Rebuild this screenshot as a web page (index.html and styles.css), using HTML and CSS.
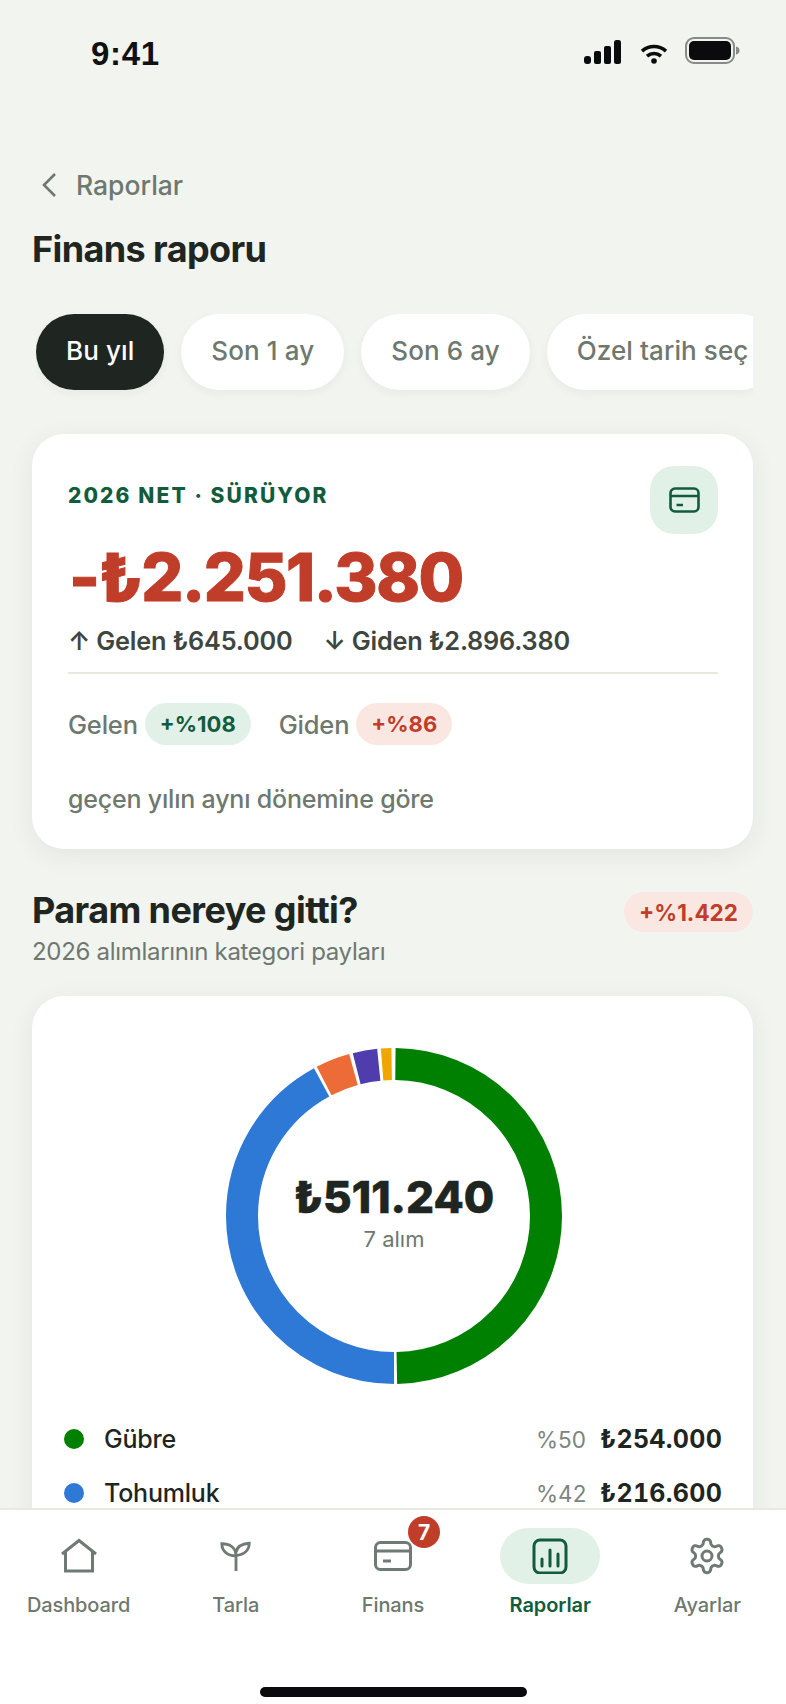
FILE: index.html
```html
<!DOCTYPE html>
<html lang="tr">
<head>
<meta charset="utf-8">
<title>Finans raporu</title>
<link rel="stylesheet" href="styles.css">
</head>
<body>
<div class="screen">
  <main class="content">
    <header class="status">
      <span class="time">9:41</span>
      <div class="status-icons">
        <svg class="sig" width="38" height="24" viewBox="0 0 38 24"><rect x="0" y="16" width="7" height="8" rx="3" /><rect x="10" y="11" width="7" height="13" rx="2" /><rect x="20" y="6" width="7" height="18" rx="2" /><rect x="30" y="0" width="7" height="24" rx="2.5" /></svg>
        <svg class="wifi" width="28" height="20" viewBox="0 0 28 20"><path d="M2 7.2C9 1 19 1 26 7.2" /><path d="M7 12.2c4.200-3.500 9.800-3.500 14 0" /><circle class="dot" cx="14" cy="17" r="2.800" /></svg>
        <svg class="batt" width="55" height="27" viewBox="0 0 55 27"><rect class="batt-o" x="1" y="1" width="48" height="25" rx="8" /><rect class="batt-f" x="4" y="4" width="42" height="19" rx="5" /><path class="batt-t" d="M51 9.500c2.500.5 3.500 2 3.500 4s-1 3.500-3.500 4z" /></svg>
      </div>
    </header>

    <nav class="back">
      <svg width="18" height="26" viewBox="0 0 18 26"><path d="M15 2 4 13l11 11" /></svg>
      <span>Raporlar</span>
    </nav>
    <h1 class="page-title">Finans raporu</h1>

    <div class="chips">
      <span class="chip chip-on">Bu yıl</span>
      <span class="chip">Son 1 ay</span>
      <span class="chip">Son 6 ay</span>
      <span class="chip">Özel tarih seç</span>
    </div>

    <section class="card net">
      <div class="net-top">
        <span class="eyebrow">2026 NET · SÜRÜYOR</span>
        <span class="icon-box">
          <svg width="31" height="26" viewBox="0 0 31 26"><rect x="1.500" y="1.500" width="28" height="23" rx="4.500" /><path d="M1.500 9h28M7.500 18h6.500" /></svg>
        </span>
      </div>
      <div class="amount">-₺2.251.380</div>
      <div class="flows"><span>↑ Gelen ₺645.000</span><span>↓ Giden ₺2.896.380</span></div>
      <div class="compare">
        <span class="cmp-label">Gelen</span><span class="pill pill-green">+%108</span>
        <span class="cmp-label cmp-second">Giden</span><span class="pill pill-red">+%86</span>
      </div>
      <p class="note">geçen yılın aynı dönemine göre</p>
    </section>

    <section class="section-head">
      <div>
        <h2 class="section-title">Param nereye gitti?</h2>
        <p class="section-sub">2026 alımlarının kategori payları</p>
      </div>
      <span class="pill pill-red pill-head">+%1.422</span>
    </section>

    <section class="card chart-card">
      <div class="donut">
        <svg width="336" height="336" viewBox="0 0 336 336">
          <g class="ring">
            <circle cx="168" cy="168" r="152" pathLength="100" stroke="#008000" stroke-dasharray="49.55 50.45" stroke-dashoffset="-0.15" />
            <circle cx="168" cy="168" r="152" pathLength="100" stroke="#2e78d6" stroke-dasharray="42.1 57.9" stroke-dashoffset="-50" />
            <circle cx="168" cy="168" r="152" pathLength="100" stroke="#ec6b37" stroke-dasharray="3.3 96.7" stroke-dashoffset="-92.4" />
            <circle cx="168" cy="168" r="152" pathLength="100" stroke="#4f3dad" stroke-dasharray="2.35 97.65" stroke-dashoffset="-96.05" />
            <circle cx="168" cy="168" r="152" pathLength="100" stroke="#f0a500" stroke-dasharray="1 99" stroke-dashoffset="-98.75" />
          </g>
        </svg>
        <div class="donut-center">
          <strong>₺511.240</strong>
          <span>7 alım</span>
        </div>
      </div>
      <ul class="legend">
        <li><i class="dot-g"></i><span class="lname">Gübre</span><span class="lpct">%50</span><b>₺254.000</b></li>
        <li><i class="dot-b"></i><span class="lname">Tohumluk</span><span class="lpct">%42</span><b>₺216.600</b></li>
      </ul>
    </section>
  </main>

  <footer class="tabbar">
    <div class="tabs">
      <div class="tab">
        <span class="tab-icon"><svg width="40" height="36" viewBox="0 0 40 36"><path d="M3 16 20 2.500 37 16M6.500 13.500V33h27V13.500" /></svg></span>
        <span class="tab-label">Dashboard</span>
      </div>
      <div class="tab">
        <span class="tab-icon"><svg width="34" height="34" viewBox="0 0 36 36"><path d="M18 34V18M18 18C8 18 3 12 3 5c7 0 15 3 15 13ZM18 14c1-6 7-9 14-9.500 0 7-5 12-14 13" /></svg></span>
        <span class="tab-label">Tarla</span>
      </div>
      <div class="tab">
        <span class="tab-icon"><svg width="38" height="30" viewBox="0 0 38 30"><rect x="1.500" y="1.500" width="35" height="27" rx="5" /><path d="M1.500 10h35M9 20h8" /></svg><em class="badge">7</em></span>
        <span class="tab-label">Finans</span>
      </div>
      <div class="tab tab-on">
        <span class="tab-icon"><svg width="36" height="36" viewBox="0 0 36 36"><rect x="2" y="2" width="32" height="33" rx="6" /><path d="M10 21v7M18 12v16M26 16v12" /></svg></span>
        <span class="tab-label">Raporlar</span>
      </div>
      <div class="tab">
        <span class="tab-icon"><svg width="40" height="40" viewBox="0 0 24 24"><path d="M12.220 2h-.44a2 2 0 0 0-2 2v.18a2 2 0 0 1-1 1.730l-.43.25a2 2 0 0 1-2 0l-.15-.08a2 2 0 0 0-2.730.73l-.22.38a2 2 0 0 0 .73 2.730l.15.1a2 2 0 0 1 1 1.720v.51a2 2 0 0 1-1 1.740l-.15.09a2 2 0 0 0-.73 2.730l.22.38a2 2 0 0 0 2.730.73l.15-.08a2 2 0 0 1 2 0l.43.25a2 2 0 0 1 1 1.730V20a2 2 0 0 0 2 2h.44a2 2 0 0 0 2-2v-.18a2 2 0 0 1 1-1.730l.43-.25a2 2 0 0 1 2 0l.15.08a2 2 0 0 0 2.730-.73l.22-.39a2 2 0 0 0-.73-2.730l-.15-.08a2 2 0 0 1-1-1.740v-.5a2 2 0 0 1 1-1.740l.15-.09a2 2 0 0 0 .73-2.730l-.22-.38a2 2 0 0 0-2.730-.73l-.15.08a2 2 0 0 1-2 0l-.43-.25a2 2 0 0 1-1-1.730V4a2 2 0 0 0-2-2z" /><circle cx="12" cy="12" r="3" /></svg></span>
        <span class="tab-label">Ayarlar</span>
      </div>
    </div>
    <div class="home-bar"></div>
  </footer>
</div>
</body>
</html>
```
FILE: styles.css
```css
* { box-sizing: border-box; }
html, body { margin: 0; padding: 0; }
body { background: #f1f4ef; font-family: Inter, "Noto Sans", sans-serif; color: #1f2520; }
.screen { width: 786px; height: 1704px; display: flex; flex-direction: column; overflow: hidden; background: #f1f4ef; }
.content { flex: 1; min-height: 0; overflow: hidden; padding: 0 33px 0 32px; }

.status { height: 82px; padding: 35px 15px 0 59px; display: flex; justify-content: space-between; align-items: flex-start; }
.time { font-family: "Liberation Sans", sans-serif; font-weight: 700; font-size: 33px; line-height: 38px; color: #111; letter-spacing: .7px; }
.status-icons { display: flex; align-items: flex-start; margin-top: 2px; margin-right: -2px; }
.sig { fill: #0b0b0d; margin-top: 3px; }
.wifi { margin: 7px 17px 0 18px; fill: none; stroke: #0b0b0d; stroke-width: 3.6; }
.wifi .dot { fill: #0b0b0d; stroke: none; }
.batt-o { fill: none; stroke: #8a8a88; stroke-width: 2; }
.batt-f { fill: #0b0b0d; }
.batt-t { fill: #8a8a88; }

.back { margin-top: 82px; height: 42px; display: flex; align-items: center; gap: 18px; padding-left: 8px; font-size: 26.500px; font-weight: 500; color: #6e786f; }
.back svg { fill: none; stroke: #6e786f; stroke-width: 2.6; }
.page-title { margin: 20px 0 0; font-size: 36px; line-height: 46px; font-weight: 700; color: #1f2520; letter-spacing: -.6px; }

.chips { display: flex; gap: 17px; margin: 42px 0 0 4px; height: 86px; overflow: hidden; }
.chip { flex: none; height: 76px; padding: 0 30px 3px; border-radius: 38px; background: #fff; box-shadow: 0 3px 10px rgba(40,60,45,.05); display: flex; align-items: center; font-size: 26px; font-weight: 500; color: #6e786f; letter-spacing: .1px; }
.chip-on { background: #1f2520; color: #fff; }

.card { background: #fff; border-radius: 32px; box-shadow: 0 6px 26px rgba(40,60,45,.07); }
.net { height: 415px; margin-top: 34px; padding: 32px 35px 0 36px; }
.net-top { display: flex; justify-content: space-between; align-items: flex-start; height: 68px; }
.eyebrow { margin-top: 17px; font-size: 21px; font-weight: 800; letter-spacing: 2.100px; color: #125c3e; line-height: 26px; }
.icon-box { width: 68px; height: 68px; border-radius: 24px; background: #e1f1e8; display: flex; align-items: center; justify-content: center; }
.icon-box svg { fill: none; stroke: #125c3e; stroke-width: 2.600; }
.amount { margin-top: 5px; margin-left: 1px; font-size: 66px; line-height: 76px; font-weight: 800; color: #c03d29; letter-spacing: -1.400px; -webkit-text-stroke: 1px #c03d29; }
.flows { display: flex; gap: 31px; margin-top: 5px; height: 54px; padding-top: 4px; border-bottom: 2px solid #e8e8df; font-size: 25.300px; line-height: 34px; font-weight: 600; color: #3e463f; letter-spacing: -.2px; }
.compare { display: flex; align-items: center; margin-top: 29px; height: 42px; }
.cmp-label { font-size: 25.500px; font-weight: 500; color: #6e786f; letter-spacing: -.2px; }
.cmp-second { margin-left: 28px; }
.pill { display: inline-flex; align-items: center; justify-content: center; height: 42px; padding: 0 15px; margin-left: 7px; border-radius: 21px; font-size: 22px; font-weight: 700; }
.pill-green { background: #e1f1e8; color: #125c3e; }
.pill-red { background: #fbe7e2; color: #c03d29; }
.note { margin: 38px 0 0; font-size: 25px; line-height: 32px; font-weight: 500; color: #6e786f; letter-spacing: -.2px; }

.section-head { display: flex; justify-content: space-between; align-items: flex-start; margin-top: 38px; }
.section-title { margin: 0; font-size: 36px; line-height: 46px; font-weight: 700; color: #1f2520; letter-spacing: -.6px; }
.section-sub { margin: 3px 0 0; font-size: 24px; line-height: 32px; color: #6e786f; letter-spacing: -.3px; }
.pill-head { margin: 5px 0 0; height: 40px; width: 129px; border-radius: 20px; padding: 0; font-size: 22.500px; }

.chart-card { margin-top: 28px; height: 600px; padding: 52px 31px 0 32px; }
.donut { position: relative; width: 336px; height: 336px; margin: 0 0 0 162px; }
.donut svg { display: block; }
.ring circle { fill: none; stroke-width: 32; transform: rotate(-90deg); transform-origin: 168px 168px; }
.donut-center { position: absolute; inset: 0; display: flex; flex-direction: column; align-items: center; justify-content: center; }
.donut-center strong { font-size: 44px; line-height: 50px; font-weight: 800; color: #1f2520; letter-spacing: 0; margin-top: -6px; -webkit-text-stroke: .6px #1f2520; }
.donut-center span { font-size: 22px; line-height: 30px; color: #6e786f; margin-top: 2px; }

.legend { list-style: none; margin: 37px 0 0; padding: 0; display: flex; flex-direction: column; gap: 18px; }
.legend li { display: flex; align-items: center; height: 36px; font-size: 25px; font-weight: 500; color: #1f2520; }
.legend i { width: 20px; height: 20px; border-radius: 50%; margin-right: 20px; }
.dot-g { background: #008000; }
.dot-b { background: #2e78d6; }
.lname { flex: 1; letter-spacing: -.2px; }
.lpct { font-size: 22.500px; font-weight: 400; color: #7c857d; width: 64px; }
.legend b { font-weight: 700; font-size: 25px; width: 122px; text-align: right; white-space: nowrap; font-variant-numeric: tabular-nums; letter-spacing: .3px; }

.tabbar { flex: none; height: 196px; background: #fff; border-top: 2px solid #e8e8df; display: flex; flex-direction: column; }
.tabs { display: grid; grid-template-columns: repeat(5, 1fr); padding-top: 18px; }
.tab { display: flex; flex-direction: column; align-items: center; }
.tab-icon { position: relative; width: 100px; height: 56px; border-radius: 28px; display: flex; align-items: center; justify-content: center; }
.tab-icon svg { fill: none; stroke: #6f7a72; stroke-width: 3; }
.tab-on .tab-icon { background: #e1f1e8; }
.tab-on .tab-icon svg { stroke: #125c3e; stroke-linecap: round; }
.tab-label { margin-top: 7px; font-size: 20px; line-height: 28px; font-weight: 500; color: #6e786f; letter-spacing: -.1px; }
.tab-on .tab-label { color: #125c3e; font-weight: 600; }
.tab:last-child .tab-icon svg { stroke-width: 1.800; }
.badge { position: absolute; left: 65px; top: -12px; width: 32px; height: 32px; border-radius: 50%; background: #c03d29; color: #fff; font-style: normal; font-size: 21px; font-weight: 700; display: flex; align-items: center; justify-content: center; }
.home-bar { width: 267px; height: 10px; border-radius: 5px; background: #0b0b0d; margin: 68px auto 0; }
```
